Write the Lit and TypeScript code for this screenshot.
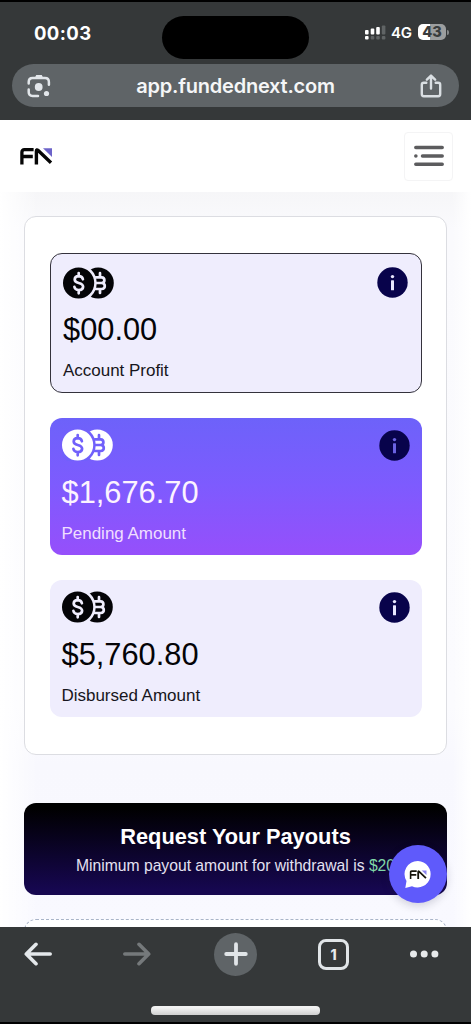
import { LitElement, html, css, svg } from "lit";
import { customElement, property } from "lit/decorators.js";
import { classMap } from "lit/directives/class-map.js";

const fnMark = (ink: string, accent: string) => svg`
  <path d="M1.9 16.5V4.2Q1.9 1.7 4.4 1.7H13.6M2.4 8.5H12.8" fill="none" stroke=${ink} stroke-width="3.3"/>
  <path d="M16.4 16.5V3.2Q16.4 1 18.2 2.6L31 14.8" fill="none" stroke=${ink} stroke-width="3.4"/>
  <path d="M23 .3H32V9Z" fill=${accent}/>`;

@customElement("coin-pair")
export class CoinPair extends LitElement {
  static styles = css`
    :host { display: block; width: 51px; height: 32px; }
    svg { display: block; }
    .disc { fill: currentColor; }
    .cut { fill: var(--surface); }
    .glyph { fill: none; stroke: var(--surface); stroke-width: 2.7; stroke-linecap: round; stroke-linejoin: round; }
  `;
  render() {
    return html`<svg width="51" height="32" viewBox="0 0 51 32">
      <circle class="disc" cx="35.2" cy="16" r="15.6"/>
      <circle class="cut" cx="15" cy="16" r="18.7"/>
      <path class="glyph" d="M33 10.4H38.6Q41.4 10.6 41.4 13.2T38.6 16H33M38.6 16Q41.8 16.2 41.8 19T38.6 22H33M37 10V6.2M37 22.4V26"/>
      <circle class="disc" cx="15.6" cy="16" r="15.6"/>
      <path class="glyph" d="M19.9 12.3Q19.2 9.2 15.7 9.2 11.7 9.3 11.7 12.5 11.7 15 15.7 16 20.1 17.1 20.1 19.8 19.9 23 15.8 23 11.9 22.9 11.4 19.9M15.7 8.9V6M15.7 23.2V26.3"/>
    </svg>`;
  }
}

@customElement("balance-card")
export class BalanceCard extends LitElement {
  @property() amount = "";
  @property() label = "";
  @property() tone = "plain";
  static styles = css`
    :host { display: block; }
    .card {
      --surface: #efedfd; box-sizing: border-box; height: 137.5px; padding: 11.5px 12px 0 12px;
      border-radius: 12px; background: var(--surface); color: #040407;
    }
    .outlined { height: 140px; border: 1.3px solid #34323c; padding: 12.5px 13px 0 12.5px; }
    .vivid { --surface: #7160fb; background: linear-gradient(#6d62fa, #7d5bfe 48%, #964ffb); color: #fff; }
    .top { display: flex; justify-content: space-between; height: 32px; }
    .amount { margin-top: 11.5px; font-size: 30.8px; line-height: 40px; }
    .label { margin-top: 11px; font-size: 17px; line-height: 20px; letter-spacing: -0.02px; color: #171620; }
    .vivid .amount { color: #fcf3ff; }
    .vivid .label { color: #f0dfff; }
    .info { display: block; margin-top: 0.5px; }
    .dot { fill: #e9e7ff; }
    .vivid .dot { fill: #6b62e2; }
  `;
  render() {
    return html`<div class=${classMap({ card: true, outlined: this.tone === "outlined", vivid: this.tone === "vivid" })}>
      <div class="top">
        <coin-pair></coin-pair>
        <svg class="info" width="31" height="31" viewBox="0 0 31 31">
          <circle cx="15.5" cy="15.5" r="15.2" fill="#08034b"/>
          <circle class="dot" cx="15.5" cy="9.6" r="1.7"/>
          <rect class="dot" x="14" y="13.2" width="3" height="10" rx=".5"/>
        </svg>
      </div>
      <div class="amount">${this.amount}</div>
      <div class="label">${this.label}</div>
    </div>`;
  }
}

@customElement("browser-header")
export class BrowserHeader extends LitElement {
  static styles = css`
    :host { display: block; box-sizing: border-box; height: 120px; border-top: 2px solid #000; background: #353839; color: #fff; font-family: Inter, sans-serif; }
    .status { display: grid; grid-template-columns: 162px 147px 1fr; height: 62px; }
    .time { padding: 18.5px 0 0 34px; font-size: 18.5px; line-height: 24px; font-weight: 700; letter-spacing: 0.4px; }
    .island { height: 43px; margin-top: 14px; border-radius: 22px; background: #000; }
    .signals { display: flex; align-items: center; height: 20px; margin-top: 20px; padding-left: 55px; }
    .net { margin-left: 5px; width: 22px; font-size: 15px; font-weight: 600; letter-spacing: -0.2px; }
    .battery { display: flex; align-items: center; margin-left: 5px; }
    .cell { width: 28px; height: 16px; border-radius: 5px; background: linear-gradient(90deg, #fff 43%, #9c9e9f 43%); color: #393c3d; font-size: 14.5px; line-height: 16px; text-align: center; font-weight: 800; }
    .cap { width: 2px; height: 5px; margin-left: 1px; border-radius: 0 2px 2px 0; background: #85888a; }
    .address { display: flex; align-items: center; justify-content: space-between; box-sizing: border-box; height: 43px; margin: 0 12px; padding: 0 17px 0 15px; border-radius: 22px; background: #5f6467; }
    .url { font-size: 20px; font-weight: 600; letter-spacing: -0.22px; color: #f5f6f7; }
  `;
  render() {
    return html`
      <div class="status">
        <div class="time">00:03</div>
        <div class="island"></div>
        <div class="signals">
          <svg width="22" height="16" viewBox="0 0 22 16">
            <g fill="#fff"><rect x="1" y="6" width="3.6" height="4.4" rx="1"/><rect x="6.7" y="4.5" width="3.6" height="5.9" rx="1"/><rect x="12.2" y="3" width="3.6" height="7.4" rx="1"/><rect x="1" y="12" width="3.6" height="3.4" rx="1"/></g>
            <g fill="#606465"><rect x="17.8" y="1.5" width="3.6" height="8.9" rx="1"/><rect x="6.7" y="12" width="3.6" height="3.4" rx="1"/><rect x="12.2" y="12" width="3.6" height="3.4" rx="1"/><rect x="17.8" y="12" width="3.6" height="3.4" rx="1"/></g>
          </svg>
          <span class="net">4G</span>
          <span class="battery"><span class="cell">43</span><span class="cap"></span></span>
        </div>
      </div>
      <div class="address">
        <svg width="24" height="24" viewBox="0 0 24 24" fill="none" stroke="#e2e6ea" stroke-width="2.5" stroke-linecap="round">
          <path d="M1.7 9.5V8Q1.7 4.1 5.6 4.1H18Q21.9 4.1 21.9 8V10.8M1.7 15.4V18Q1.7 21.9 5.6 21.9H11"/>
          <path d="M7.8 4 9.2 1H14.8L16.2 4Z" fill="#e2e6ea" stroke="none"/>
          <circle cx="11.7" cy="13" r="3.9" fill="#e2e6ea" stroke="none"/><circle cx="19.5" cy="19.5" r="2.6" fill="#e2e6ea" stroke="none"/>
        </svg>
        <span class="url">app.fundednext.com</span>
        <svg width="22" height="24" viewBox="0 0 22 24" fill="none" stroke="#dadfe3" stroke-width="2.4" stroke-linecap="round" stroke-linejoin="round">
          <path d="M6.3 8.7H3.8Q1.8 8.7 1.8 10.7V20Q1.8 22.2 3.8 22.2H18.2Q20.2 22.2 20.2 20V10.7Q20.2 8.7 18.2 8.7H15.7M11 14.6V1.8M6.9 5.7 11 1.6 15.1 5.7"/>
        </svg>
      </div>`;
  }
}

@customElement("browser-toolbar")
export class BrowserToolbar extends LitElement {
  static styles = css`
    :host { display: block; box-sizing: border-box; height: 97px; border-bottom: 2px solid #000; background: #353839; font-family: Inter, sans-serif; }
    .row { display: flex; align-items: center; gap: 61px; height: 54px; padding-left: 24px; }
    .row svg { display: block; }
    .forward { margin-left: 10px; }
    .new { display: grid; place-items: center; width: 43px; height: 43px; margin-left: 2px; border-radius: 50%; background: #5f6467; }
    .tabs { box-sizing: border-box; width: 31px; height: 31px; border: 3px solid #e1e5e8; border-radius: 8px; color: #e8ebed; font-size: 14px; font-weight: 800; line-height: 25px; text-align: center; }
    .home { width: 169px; height: 9px; margin: 25px auto 0 151px; border-radius: 4px; background: linear-gradient(#f2f2f2 20%, #cfcfcf); }
  `;
  render() {
    return html`
      <div class="row">
        <svg width="28" height="24" viewBox="0 0 28 24" fill="none" stroke="#e4e8eb" stroke-width="3.6" stroke-linecap="round" stroke-linejoin="round"><path d="M26.2 12H2.5M12 2.3 2.3 12 12 21.7"/></svg>
        <svg class="forward" width="28" height="24" viewBox="0 0 28 24" fill="none" stroke="#75797b" stroke-width="3.6" stroke-linecap="round" stroke-linejoin="round"><path d="M1.8 12H25.5M16 2.3 25.7 12 16 21.7"/></svg>
        <div class="new"><svg width="24" height="24" viewBox="0 0 24 24" stroke="#e1e5e8" stroke-width="3.8" stroke-linecap="round"><path d="M12 2.2V21.8M2.2 12H21.8"/></svg></div>
        <div class="tabs">1</div>
        <svg width="29" height="8" viewBox="0 0 29 8" fill="#e7e9eb"><circle cx="3.5" cy="4" r="3.5"/><circle cx="14.2" cy="4" r="3.5"/><circle cx="24.9" cy="4" r="3.5"/></svg>
      </div>
      <div class="home"></div>`;
  }
}

@customElement("app-root")
export class AppRoot extends LitElement {
  static styles = css`
    :host { display: flex; flex-direction: column; position: relative; width: 471px; height: 1024px; overflow: hidden; font-family: "Liberation Sans", Arial, sans-serif; background: #fff; }
    .nav { display: flex; align-items: center; justify-content: space-between; flex: none; box-sizing: border-box; height: 72px; padding: 0 18px 0 20px; background: #fff; }
    .menu { display: grid; place-items: center; box-sizing: border-box; width: 49px; height: 49px; border: 1.5px solid #f4f4f5; border-radius: 4px; }
    .page { flex: 1; min-height: 0; overflow: hidden; padding: 24px 24px 0; background: linear-gradient(90deg, #fff, transparent 8%, transparent 96%, #fff), linear-gradient(#f6f6f8, #fafafd 5%, #fbfbfe 70%, #f8f8fe 78%, #f9f9ff); }
    .panel { display: flex; flex-direction: column; gap: 24.5px; box-sizing: border-box; height: 538.5px; padding: 36px 24.5px 0; border: 1.5px solid #dcdde2; border-radius: 12px; background: #fff; }
    .payout { box-sizing: border-box; height: 92px; margin-top: 48.5px; padding-top: 20px; border-radius: 12px; background: linear-gradient(#000 5%, #160750 95%); text-align: center; color: #fff; }
    .title { font-size: 21.8px; line-height: 28px; font-weight: 700; }
    .note { margin-top: 5px; font-size: 15.7px; line-height: 20px; color: #e4e1f1; white-space: nowrap; }
    .min { color: #80d7a7; }
    .next { height: 60px; margin-top: 24px; border: 1px dashed #a9b4c9; border-radius: 12px; background: #fff; }
    .chat { position: absolute; left: 389px; top: 845px; width: 58px; height: 58px; border-radius: 50%; background: #5f5afb; box-shadow: 0 3px 9px rgba(30, 30, 60, 0.18); }
  `;
  private cards = [
    { amount: "$00.00", label: "Account Profit", tone: "outlined" },
    { amount: "$1,676.70", label: "Pending Amount", tone: "vivid" },
    { amount: "$5,760.80", label: "Disbursed Amount", tone: "plain" },
  ];
  render() {
    return html`
      <browser-header></browser-header>
      <div class="nav">
        <svg width="33" height="17" viewBox="0 0 33 17">${fnMark("#060606", "#6c63c9")}</svg>
        <div class="menu">
          <svg width="30" height="22" viewBox="0 0 30 22" stroke="#5c5c5e" stroke-width="3.5" stroke-linecap="round"><path d="M1.8 2.5H28.2M1.8 10.9H1.9M8.5 10.9H28.2M1.8 19.2H28.2"/></svg>
        </div>
      </div>
      <div class="page">
        <div class="panel">
          ${this.cards.map((c) => html`<balance-card amount=${c.amount} label=${c.label} tone=${c.tone}></balance-card>`)}
        </div>
        <div class="payout">
          <div class="title">Request Your Payouts</div>
          <div class="note">Minimum payout amount for withdrawal is <span class="min">$20</span></div>
        </div>
        <div class="next"></div>
      </div>
      <browser-toolbar></browser-toolbar>
      <svg class="chat" viewBox="0 0 58 58">
        <path d="M29 16A13.2 13.2 0 1 1 23 41.2L16.3 43 17.5 36A13.2 13.2 0 0 1 29 16Z" fill="#fff"/>
        <svg x="20.5" y="25" width="17.5" height="9.5" viewBox="0 0 33 17">${fnMark("#17150c", "#8b84ee")}</svg>
      </svg>`;
  }
}
